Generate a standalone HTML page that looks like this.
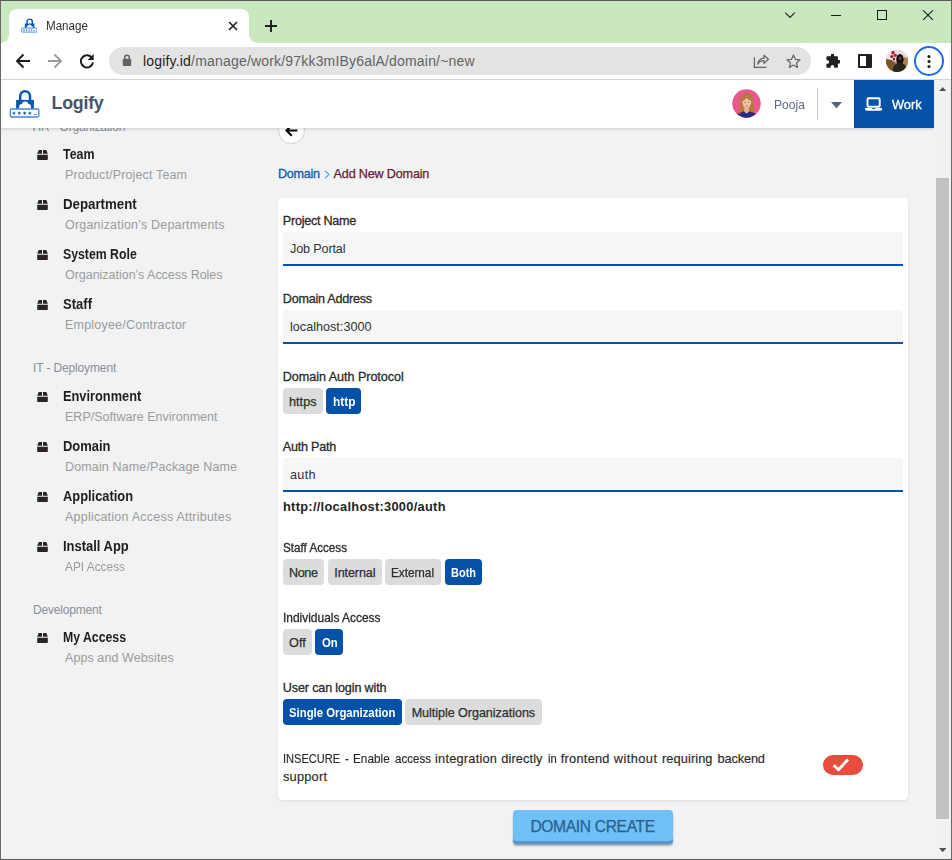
<!DOCTYPE html>
<html lang="en">
<head>
<meta charset="utf-8">
<title>Manage</title>
<style>
*{box-sizing:border-box;margin:0;padding:0}
html,body{width:952px;height:860px;overflow:hidden;background:#fff}
body{font-family:"Liberation Sans",sans-serif;position:relative;color:#222}
.abs{position:absolute}
.t{position:absolute;white-space:nowrap;line-height:1}
#frame{position:absolute;left:0;top:0;width:952px;height:860px;border:1px solid #686868;border-top-color:#545951;border-bottom-color:#5a5a5a;pointer-events:none;z-index:100}
#tabstrip{left:1px;top:1px;width:950px;height:42px;background:#c9e8c0}
#tab{left:9px;top:9px;width:240px;height:34px;background:#fff;border-radius:8px 8px 0 0}
#tab:before,#tab:after{content:"";position:absolute;bottom:0;width:8px;height:8px;background:radial-gradient(circle at 0 0,transparent 7.5px,#fff 8px)}
#tab:before{left:-8px}
#tab:after{right:-8px;background:radial-gradient(circle at 100% 0,transparent 7.5px,#fff 8px)}
#toolbar{left:1px;top:43px;width:950px;height:37px;background:#fff;border-bottom:1px solid #d3d6d6}
#omni{left:109px;top:47px;width:702px;height:28px;border-radius:14px;background:#e3e3e3}
#app{left:1px;top:80px;width:933px;height:779px;background:#f0f2f4;overflow:hidden}
#hdr{left:0;top:0;width:933px;height:48px;background:#fff;box-shadow:0 1px 3px rgba(0,0,0,.16);z-index:5}
#work{left:853px;top:0;width:80px;height:48px;background:#0352a8}
#sb{left:934px;top:80px;width:17px;height:779px;background:#f1f1f1}
#thumb{left:2px;top:98px;width:13px;height:641px;background:#c1c1c1}
#card{left:277px;top:118px;width:630px;height:602px;background:#fff;border-radius:4px;box-shadow:0 1px 3px rgba(0,0,0,.09)}
.inp{position:absolute;left:282px;width:620px;height:34px;background:#f6f6f6;border-bottom:2px solid #0352a8;border-radius:3px 3px 0 0}
.btn{position:absolute;height:26px;border-radius:4px;background:#dcdcdc}
.btn.on{background:#0352a8}
</style>
</head>
<body>
<div id="tabstrip" class="abs"></div>
<div id="tab" class="abs"></div>
<svg class="abs" style="left:20.600px;top:18.400px" width="16.700" height="15.100" viewBox="0 0 31 30" preserveAspectRatio="none"><path d="M11.200 12V7.200a4.900 4.900 0 0 1 9.800 0V12" fill="none" stroke="#0b57b0" stroke-width="2.700"/><path d="M7.100 10.900h17.800v8.900H7.100z" fill="#0b57b0"/><g fill="#fff"><circle cx="16.100" cy="15.700" r="3"/><circle cx="12.900" cy="17.700" r="2.300"/><circle cx="19.300" cy="17.700" r="2.300"/><rect x="10.600" y="17.700" width="11" height="2.300"/></g><rect x="1.300" y="20" width="28.600" height="8" rx="1.500" fill="#fff" stroke="#3c7fd4" stroke-width="1.700"/><g fill="#0b57b0"><rect x="4.300" y="23" width="2.400" height="2.200"/><rect x="9" y="23" width="2.400" height="2.200"/><rect x="13.800" y="23" width="2.400" height="2.200"/><rect x="18.600" y="23" width="2.400" height="2.200"/><rect x="23.200" y="24.600" width="3.200" height="1.100"/></g></svg>
<div class="t" style="left:45.70px;top:20px;font-size:12.30px;color:#2d2d33;transform:scaleX(0.9426);transform-origin:0 0;">Manage</div>
<svg class="abs" style="left:227px;top:20px" width="12" height="12" viewBox="0 0 12 12"><path d="M2 2l8 8M10 2l-8 8" stroke="#1f1f1f" stroke-width="1.600" fill="none"/></svg>
<svg class="abs" style="left:264px;top:19px" width="14" height="14" viewBox="0 0 14 14"><path d="M7 1v12M1 7h12" stroke="#1f1f1f" stroke-width="1.900" fill="none"/></svg>
<svg class="abs" style="left:783px;top:10px" width="14" height="10" viewBox="0 0 14 10"><path d="M2.200 2.600l4.800 4.800L11.800 2.600" stroke="#1f1f1f" stroke-width="1.050" fill="none"/></svg>
<div class="abs" style="left:831px;top:15px;width:10px;height:1px;background:#1a1a1a"></div>
<div class="abs" style="left:877px;top:10px;width:10px;height:10px;border:1px solid #1a1a1a"></div>
<svg class="abs" style="left:922px;top:9px" width="12" height="12" viewBox="0 0 12 12"><path d="M1.100 1.400l9.800 9.400M10.900 1.400L1.100 10.800" stroke="#1a1a1a" stroke-width="1.100" fill="none"/></svg>
<div id="toolbar" class="abs"></div>
<svg class="abs" style="left:15px;top:53px" width="16" height="16" viewBox="0 0 16 16"><path d="M15 8H2.500M8.500 1.500L2 8l6.500 6.500" stroke="#1b1b1b" stroke-width="1.900" fill="none"/></svg>
<svg class="abs" style="left:47px;top:53px" width="16" height="16" viewBox="0 0 16 16"><path d="M1 8h12.500M7.500 1.500L14 8l-6.500 6.500" stroke="#9b9b9b" stroke-width="1.900" fill="none"/></svg>
<svg class="abs" style="left:79px;top:53px" width="16" height="16" viewBox="0 0 16 16"><path d="M13.200 5.200A6.100 6.100 0 1 0 14 9.400" stroke="#1b1b1b" stroke-width="1.900" fill="none"/><path d="M14.600 1v6h-6z" fill="#1b1b1b"/></svg>
<div id="omni" class="abs"></div>
<svg class="abs" style="left:122px;top:54px" width="10" height="13" viewBox="0 0 10 13"><path d="M2.700 5V3.600a2.300 2.300 0 0 1 4.600 0V5" stroke="#5f6368" stroke-width="1.500" fill="none"/><rect x="0.800" y="4.800" width="8.400" height="7.200" rx="0.900" fill="#5f6368"/></svg>
<div class="t" style="left:143px;top:53.5px;font-size:14px;color:#1f1f1f;letter-spacing:0.185px">logify.id<span style="color:#5f6368">/manage/work/97kk3mIBy6alA/domain/~new</span></div>
<svg class="abs" style="left:752px;top:52px" width="18" height="18" viewBox="0 0 18 18"><path d="M2.400 5.300v10.100h11.900" stroke="#5f6368" stroke-width="1.200" fill="none"/><path d="M5.700 12.200c.5-3.600 2.700-5.700 6.300-6V3.200L16.400 7.300l-4.400 4.100V8.700c-2.700-.1-4.700.9-6.300 3.500z" stroke="#5f6368" stroke-width="1.200" fill="none" stroke-linejoin="round"/></svg>
<svg class="abs" style="left:784.700px;top:52.600px" width="17" height="17" viewBox="0 0 18 18"><path d="M9 2.200l2.050 4.500 4.850.5-3.650 3.300 1.050 4.800L9 12.800 4.700 15.300l1.050-4.800L2.100 7.200l4.850-.5z" stroke="#5f6368" stroke-width="1.300" fill="none" stroke-linejoin="round"/></svg>
<svg class="abs" style="left:824.600px;top:53.800px" width="15.200" height="15.200" viewBox="0 0 16 16"><path d="M6.200 1.200a1.700 1.700 0 0 1 3.400 0v1.300h3.200a.8.800 0 0 1 .8.800v3h1.100a1.800 1.800 0 0 1 0 3.600h-1.100v3.700a.8.800 0 0 1-.8.800H9.600v-1.100a1.800 1.800 0 0 0-3.600 0v1.100H2.300a.8.800 0 0 1-.8-.8v-3.400h1.100a1.800 1.800 0 0 0 0-3.600H1.500V3.300a.8.800 0 0 1 .8-.8h3.900z" fill="#1f1f1f"/></svg>
<div class="abs" style="left:858px;top:54px;width:14px;height:14px;border:2px solid #1f1f1f;border-right-width:6px;border-radius:1px"></div>
<svg class="abs" style="left:885.900px;top:49.800px" width="22" height="22" viewBox="0 0 22 22"><defs><clipPath id="pc"><circle cx="11" cy="11" r="11"/></clipPath><filter id="pb" x="-20%" y="-20%" width="140%" height="140%"><feGaussianBlur stdDeviation="0.55"/></filter></defs><g clip-path="url(#pc)"><rect width="22" height="22" fill="#b58f55"/><g filter="url(#pb)"><path d="M0 0h22v9H13L9 12 0 10z" fill="#e6dfe6"/><path d="M0 9l6 1 2 4-1 6-7 1z" fill="#7a5626"/><path d="M18 7l4 1v10l-4-2z" fill="#a8834c"/><path d="M7.500 6l1.300 9.500-1.200.2z" fill="#3c5a1e"/><circle cx="7" cy="2.700" r="1.700" fill="#b3141d"/><circle cx="9.300" cy="5.300" r="1.600" fill="#c21822"/><circle cx="5.800" cy="6.500" r="1.500" fill="#a3131b"/><circle cx="8" cy="9" r="1.200" fill="#8f1a20"/><ellipse cx="14" cy="9.300" rx="3.700" ry="5.200" fill="#15110f"/><ellipse cx="14.100" cy="8.300" rx="1.300" ry="1.700" fill="#6d4832"/><path d="M6.500 22c0-6 3-9.500 7.500-9.500s6.500 3.500 6.500 9.500z" fill="#20261d"/><circle cx="8.800" cy="13.500" r=".9" fill="#c43aa0"/></g></g></svg>
<div class="abs" style="left:914px;top:46px;width:30px;height:30px;border-radius:50%;border:2px solid #1a6ce6"></div>
<svg class="abs" style="left:927px;top:53px" width="4" height="16" viewBox="0 0 4 16"><circle cx="2" cy="3.500" r="1.550" fill="#1f1f1f"/><circle cx="2" cy="8.500" r="1.550" fill="#1f1f1f"/><circle cx="2" cy="13.500" r="1.550" fill="#1f1f1f"/></svg>
<div id="app" class="abs">
<div id="hdr" class="abs">
<svg class="abs" style="left:8.200px;top:9px" width="31" height="30" viewBox="0 0 31 30"><path d="M11.200 12V7.200a4.900 4.900 0 0 1 9.800 0V12" fill="none" stroke="#0b57b0" stroke-width="2.500"/><path d="M7.100 10.900h17.800v8.900H7.100z" fill="#0b57b0"/><g fill="#fff"><circle cx="16.100" cy="15.700" r="3.200"/><circle cx="12.700" cy="17.500" r="2.500"/><circle cx="19.500" cy="17.500" r="2.500"/><rect x="10.300" y="17.500" width="11.600" height="2.500"/></g><rect x="1.300" y="20" width="28.600" height="8" rx="1.500" fill="#fff" stroke="#4585d6" stroke-width="1.300"/><path d="M5.00 22.70v3.00M3.70 23.45l2.61 1.50M6.30 23.45l-2.61 1.50M10.30 22.70v3.00M9.00 23.45l2.61 1.50M11.61 23.45l-2.61 1.50M15.60 22.70v3.00M14.29 23.45l2.61 1.50M16.91 23.45l-2.61 1.50M20.90 22.70v3.00M19.59 23.45l2.61 1.50M22.20 23.45l-2.61 1.50" stroke="#0b57b0" stroke-width=".85" fill="none"/><rect x="24.900" y="25" width="2.900" height="0.900" fill="#4585d6"/></svg>
<div class="t" style="left:50.60px;top:15px;font-size:17.80px;color:#44546a;letter-spacing:-0.238px;font-weight:bold;">Logify</div>
<svg class="abs" style="left:731.400px;top:9.100px" width="29" height="29" viewBox="0 0 29 29"><defs><clipPath id="uc"><circle cx="14.500" cy="14.500" r="14.200"/></clipPath></defs><circle cx="14.500" cy="14.500" r="14.200" fill="#e9588f"/><g clip-path="url(#uc)"><path d="M8 12.500c0-6 3-8.500 6.800-8.500s6.700 2.500 6.700 8c0 4 .8 8 1.200 11H6.500c1-3 1.500-6.500 1.500-10.500z" fill="#b9783f"/><path d="M3.500 30c0-5.500 4.500-7.800 11-7.800S25.500 24.500 25.500 30z" fill="#2d2a7e"/><path d="M12.300 18.500h4.600v4.300l-2.300 1.700-2.300-1.700z" fill="#e5b48f"/><ellipse cx="14.700" cy="13.300" rx="4.400" ry="5.700" fill="#efc6a4"/><path d="M10 12.200c.8-3.600 2.700-4.700 4.700-4.700s4 1.100 4.600 4.300c-2-.4-3.400-1.300-4.800-3-1.200 1.800-2.700 2.900-4.500 3.400z" fill="#b9783f"/><path d="M9.800 12c-1.200 4-.6 9-3 13.500 2.800-1.500 4.200-4 4.300-7.500z" fill="#b9783f"/><circle cx="12.900" cy="13.300" r=".6" fill="#4c6a8a"/><circle cx="16.500" cy="13.300" r=".6" fill="#4c6a8a"/><path d="M13.700 16.700q1 .6 2 0" stroke="#d03a3a" stroke-width=".9" fill="none"/></g></svg>
<div class="t" style="left:773.20px;top:18px;font-size:13.40px;color:#5d6b7e;transform:scaleX(0.9045);transform-origin:0 0;">Pooja</div>
<div class="abs" style="left:816px;top:8px;width:1px;height:32px;background:#cacaca"></div>
<svg class="abs" style="left:829.700px;top:21.800px" width="11" height="6.300" viewBox="0 0 11 6.300"><path d="M0 0h11L5.500 6.300z" fill="#566579"/></svg>
<div id="work" class="abs"><svg class="abs" style="left:11px;top:17px" width="17.200" height="14" viewBox="0 0 18 14" preserveAspectRatio="none"><rect x="2.600" y="1.300" width="12.800" height="8.400" rx="1" fill="none" stroke="#fff" stroke-width="2"/><path d="M0 11h18v.8a1.900 1.900 0 0 1-1.900 1.900H1.900A1.900 1.900 0 0 1 0 11.800z" fill="#fff"/><rect x="7.200" y="11" width="3.600" height="0.900" fill="#0352a8"/></svg><div class="t" style="left:38.00px;top:18px;font-size:13.60px;color:#fff;transform:scaleX(0.9402);transform-origin:0 0;-webkit-text-stroke:0.35px #fff;">Work</div></div>
</div>
<div class="t" style="left:31.50px;top:41px;font-size:12.00px;color:#8c9096;letter-spacing:-0.190px;">HR - Organization</div>
<svg class="abs" style="left:36px;top:70.00px" width="11" height="10" viewBox="0 0 11 10"><path d="M1.700 0h3.300v3.800H0.200z M6 0h3.300l1.500 3.800H6z M0.200 4.700h10.600v4.500a.7.700 0 0 1-.7.700H0.900a.7.700 0 0 1-.7-.7z" fill="#2a2321"/></svg>
<div class="t" style="left:61.80px;top:67px;font-size:14.00px;color:#211c1e;transform:scaleX(0.8865);transform-origin:0 0;font-weight:bold;">Team</div>
<div class="t" style="left:64.00px;top:89px;font-size:12.50px;color:#9b9b9b;letter-spacing:0.144px;">Product/Project Team</div>
<svg class="abs" style="left:36px;top:120.00px" width="11" height="10" viewBox="0 0 11 10"><path d="M1.700 0h3.300v3.800H0.200z M6 0h3.300l1.500 3.800H6z M0.200 4.700h10.600v4.500a.7.700 0 0 1-.7.700H0.900a.7.700 0 0 1-.7-.7z" fill="#2a2321"/></svg>
<div class="t" style="left:61.80px;top:117px;font-size:14.00px;color:#211c1e;transform:scaleX(0.9480);transform-origin:0 0;font-weight:bold;">Department</div>
<div class="t" style="left:64.00px;top:139px;font-size:12.50px;color:#9b9b9b;letter-spacing:0.192px;">Organization’s Departments</div>
<svg class="abs" style="left:36px;top:170.00px" width="11" height="10" viewBox="0 0 11 10"><path d="M1.700 0h3.300v3.800H0.200z M6 0h3.300l1.500 3.800H6z M0.200 4.700h10.600v4.500a.7.700 0 0 1-.7.700H0.900a.7.700 0 0 1-.7-.7z" fill="#2a2321"/></svg>
<div class="t" style="left:61.80px;top:167px;font-size:14.00px;color:#211c1e;transform:scaleX(0.8776);transform-origin:0 0;font-weight:bold;">System Role</div>
<div class="t" style="left:64.00px;top:189px;font-size:12.50px;color:#9b9b9b;letter-spacing:-0.026px;">Organization’s Access Roles</div>
<svg class="abs" style="left:36px;top:220.00px" width="11" height="10" viewBox="0 0 11 10"><path d="M1.700 0h3.300v3.800H0.200z M6 0h3.300l1.500 3.800H6z M0.200 4.700h10.600v4.500a.7.700 0 0 1-.7.700H0.900a.7.700 0 0 1-.7-.7z" fill="#2a2321"/></svg>
<div class="t" style="left:61.80px;top:217px;font-size:14.00px;color:#211c1e;transform:scaleX(0.9322);transform-origin:0 0;font-weight:bold;">Staff</div>
<div class="t" style="left:64.00px;top:239px;font-size:12.50px;color:#9b9b9b;letter-spacing:0.213px;">Employee/Contractor</div>
<svg class="abs" style="left:36px;top:312.00px" width="11" height="10" viewBox="0 0 11 10"><path d="M1.700 0h3.300v3.800H0.200z M6 0h3.300l1.500 3.800H6z M0.200 4.700h10.600v4.500a.7.700 0 0 1-.7.700H0.900a.7.700 0 0 1-.7-.7z" fill="#2a2321"/></svg>
<div class="t" style="left:61.80px;top:309px;font-size:14.00px;color:#211c1e;transform:scaleX(0.9145);transform-origin:0 0;font-weight:bold;">Environment</div>
<div class="t" style="left:64.00px;top:331px;font-size:12.50px;color:#9b9b9b;letter-spacing:0.015px;">ERP/Software Environment</div>
<svg class="abs" style="left:36px;top:362.00px" width="11" height="10" viewBox="0 0 11 10"><path d="M1.700 0h3.300v3.800H0.200z M6 0h3.300l1.500 3.800H6z M0.200 4.700h10.600v4.500a.7.700 0 0 1-.7.700H0.900a.7.700 0 0 1-.7-.7z" fill="#2a2321"/></svg>
<div class="t" style="left:61.80px;top:359px;font-size:14.00px;color:#211c1e;transform:scaleX(0.9252);transform-origin:0 0;font-weight:bold;">Domain</div>
<div class="t" style="left:64.00px;top:381px;font-size:12.50px;color:#9b9b9b;letter-spacing:0.138px;">Domain Name/Package Name</div>
<svg class="abs" style="left:36px;top:412.00px" width="11" height="10" viewBox="0 0 11 10"><path d="M1.700 0h3.300v3.800H0.200z M6 0h3.300l1.500 3.800H6z M0.200 4.700h10.600v4.500a.7.700 0 0 1-.7.700H0.900a.7.700 0 0 1-.7-.7z" fill="#2a2321"/></svg>
<div class="t" style="left:61.80px;top:409px;font-size:14.00px;color:#211c1e;transform:scaleX(0.9184);transform-origin:0 0;font-weight:bold;">Application</div>
<div class="t" style="left:64.00px;top:431px;font-size:12.50px;color:#9b9b9b;letter-spacing:0.230px;">Application Access Attributes</div>
<svg class="abs" style="left:36px;top:462.00px" width="11" height="10" viewBox="0 0 11 10"><path d="M1.700 0h3.300v3.800H0.200z M6 0h3.300l1.500 3.800H6z M0.200 4.700h10.600v4.500a.7.700 0 0 1-.7.700H0.900a.7.700 0 0 1-.7-.7z" fill="#2a2321"/></svg>
<div class="t" style="left:61.80px;top:459px;font-size:14.00px;color:#211c1e;transform:scaleX(0.9255);transform-origin:0 0;font-weight:bold;">Install App</div>
<div class="t" style="left:64.00px;top:481px;font-size:12.50px;color:#9b9b9b;transform:scaleX(0.9491);transform-origin:0 0;">API Access</div>
<svg class="abs" style="left:36px;top:553.00px" width="11" height="10" viewBox="0 0 11 10"><path d="M1.700 0h3.300v3.800H0.200z M6 0h3.300l1.500 3.800H6z M0.200 4.700h10.600v4.500a.7.700 0 0 1-.7.700H0.900a.7.700 0 0 1-.7-.7z" fill="#2a2321"/></svg>
<div class="t" style="left:61.80px;top:550px;font-size:14.00px;color:#211c1e;transform:scaleX(0.8767);transform-origin:0 0;font-weight:bold;">My Access</div>
<div class="t" style="left:64.00px;top:572px;font-size:12.50px;color:#9b9b9b;letter-spacing:0.080px;">Apps and Websites</div>
<div class="t" style="left:32.00px;top:282px;font-size:12.00px;color:#8c9096;letter-spacing:-0.135px;">IT - Deployment</div>
<div class="t" style="left:32.00px;top:524px;font-size:12.00px;color:#8c9096;letter-spacing:-0.196px;">Development</div>
<div class="abs" style="left:277px;top:37px;width:27px;height:27px;border-radius:50%;background:#fff;border:1px solid #d0d0d0"></div>
<svg class="abs" style="left:283.9px;top:43.8px" width="13" height="13" viewBox="0 0 13 13"><path d="M12.400 6.500H1.800M6.700 1.200L1.400 6.500l5.300 5.300" stroke="#0a0a0a" stroke-width="2.100" fill="none"/></svg>
<div class="t" style="left:276.90px;top:88px;font-size:12.60px;color:#0f58ad;letter-spacing:-0.243px;-webkit-text-stroke:0.3px #0f58ad;">Domain</div>
<svg class="abs" style="left:323.0px;top:89.6px" width="6" height="9" viewBox="0 0 6 9"><path d="M1 0.700L5 4.500 1 8.300" stroke="#5aa9ea" stroke-width="1.200" fill="none"/></svg>
<div class="t" style="left:332.60px;top:88px;font-size:12.60px;color:#6a1b29;letter-spacing:-0.173px;-webkit-text-stroke:0.25px #6a1b29;">Add New Domain</div>
<div id="card" class="abs"></div>
<div class="t" style="left:281.80px;top:135px;font-size:12.60px;color:#2a2a2a;letter-spacing:-0.252px;-webkit-text-stroke:0.3px #2a2a2a;">Project Name</div>
<div class="inp" style="top:152px"></div>
<div class="t" style="left:289.00px;top:163px;font-size:12.60px;color:#333;letter-spacing:-0.137px;">Job Portal</div>
<div class="t" style="left:281.80px;top:213px;font-size:12.60px;color:#2a2a2a;letter-spacing:-0.242px;-webkit-text-stroke:0.3px #2a2a2a;">Domain Address</div>
<div class="inp" style="top:230px"></div>
<div class="t" style="left:289.00px;top:241px;font-size:12.60px;color:#333;letter-spacing:0.018px;">localhost:3000</div>
<div class="t" style="left:281.80px;top:291px;font-size:12.60px;color:#2a2a2a;letter-spacing:-0.043px;-webkit-text-stroke:0.3px #2a2a2a;">Domain Auth Protocol</div>
<div class="btn" style="left:282.00px;top:308px;width:40.00px"></div>
<div class="t" style="left:288.00px;top:316px;font-size:12.60px;color:#2e2e2e;letter-spacing:0.046px;-webkit-text-stroke:0.25px #2e2e2e;">https</div>
<div class="btn on" style="left:325.00px;top:308px;width:35.00px"></div>
<div class="t" style="left:331.50px;top:316px;font-size:12.60px;color:#fff;transform:scaleX(0.9460);transform-origin:0 0;font-weight:bold;">http</div>
<div class="t" style="left:281.80px;top:361px;font-size:12.60px;color:#2a2a2a;letter-spacing:-0.224px;-webkit-text-stroke:0.3px #2a2a2a;">Auth Path</div>
<div class="inp" style="top:378px"></div>
<div class="t" style="left:289.00px;top:389px;font-size:12.60px;color:#333;letter-spacing:0.326px;">auth</div>
<div class="t" style="left:282.00px;top:421px;font-size:12.80px;color:#1f1f1f;letter-spacing:0.298px;font-weight:bold;">http://localhost:3000/auth</div>
<div class="t" style="left:281.80px;top:462px;font-size:12.60px;color:#2a2a2a;transform:scaleX(0.9269);transform-origin:0 0;-webkit-text-stroke:0.3px #2a2a2a;">Staff Access</div>
<div class="btn" style="left:282.00px;top:479px;width:40.80px"></div>
<div class="t" style="left:288.00px;top:487px;font-size:12.60px;color:#2e2e2e;letter-spacing:-0.374px;-webkit-text-stroke:0.25px #2e2e2e;">None</div>
<div class="btn" style="left:327.00px;top:479px;width:53.70px"></div>
<div class="t" style="left:333.30px;top:487px;font-size:12.60px;color:#2e2e2e;letter-spacing:-0.118px;-webkit-text-stroke:0.25px #2e2e2e;">Internal</div>
<div class="btn" style="left:384.00px;top:479px;width:56.00px"></div>
<div class="t" style="left:390.40px;top:487px;font-size:12.60px;color:#2e2e2e;transform:scaleX(0.9303);transform-origin:0 0;-webkit-text-stroke:0.25px #2e2e2e;">External</div>
<div class="btn on" style="left:444.00px;top:479px;width:37.00px"></div>
<div class="t" style="left:450.30px;top:487px;font-size:12.60px;color:#fff;transform:scaleX(0.8714);transform-origin:0 0;font-weight:bold;">Both</div>
<div class="t" style="left:281.80px;top:532px;font-size:12.60px;color:#2a2a2a;transform:scaleX(0.9475);transform-origin:0 0;-webkit-text-stroke:0.3px #2a2a2a;">Individuals Access</div>
<div class="btn" style="left:282.00px;top:549px;width:28.80px"></div>
<div class="t" style="left:288.00px;top:557px;font-size:12.60px;color:#2e2e2e;letter-spacing:0.088px;-webkit-text-stroke:0.25px #2e2e2e;">Off</div>
<div class="btn on" style="left:314.00px;top:549px;width:28.00px"></div>
<div class="t" style="left:320.70px;top:557px;font-size:12.60px;color:#fff;transform:scaleX(0.9030);transform-origin:0 0;font-weight:bold;">On</div>
<div class="t" style="left:281.80px;top:602px;font-size:12.60px;color:#2a2a2a;letter-spacing:-0.147px;-webkit-text-stroke:0.3px #2a2a2a;">User can login with</div>
<div class="btn on" style="left:282.00px;top:619px;width:118.80px"></div>
<div class="t" style="left:288.00px;top:627px;font-size:12.60px;color:#fff;transform:scaleX(0.9002);transform-origin:0 0;font-weight:bold;">Single Organization</div>
<div class="btn" style="left:404.00px;top:619px;width:137.00px"></div>
<div class="t" style="left:410.70px;top:627px;font-size:12.60px;color:#2e2e2e;letter-spacing:-0.055px;-webkit-text-stroke:0.25px #2e2e2e;">Multiple Organizations</div>
<div class="t" style="left:282.00px;top:673px;font-size:12.80px;color:#2a2a2a;transform:scaleX(0.8618);transform-origin:0 0;-webkit-text-stroke:0.15px #2a2a2a;">INSECURE</div>
<div class="t" style="left:344.00px;top:673px;font-size:12.80px;color:#2a2a2a;transform:scaleX(0.8797);transform-origin:0 0;-webkit-text-stroke:0.15px #2a2a2a;">-</div>
<div class="t" style="left:352.25px;top:673px;font-size:12.80px;color:#2a2a2a;transform:scaleX(0.9221);transform-origin:0 0;-webkit-text-stroke:0.15px #2a2a2a;">Enable</div>
<div class="t" style="left:393.50px;top:673px;font-size:12.80px;color:#2a2a2a;transform:scaleX(0.9037);transform-origin:0 0;-webkit-text-stroke:0.15px #2a2a2a;">access</div>
<div class="t" style="left:434.00px;top:673px;font-size:12.80px;color:#2a2a2a;letter-spacing:0.222px;-webkit-text-stroke:0.15px #2a2a2a;">integration</div>
<div class="t" style="left:500.25px;top:673px;font-size:12.80px;color:#2a2a2a;letter-spacing:0.101px;-webkit-text-stroke:0.15px #2a2a2a;">directly</div>
<div class="t" style="left:546.50px;top:673px;font-size:12.80px;color:#2a2a2a;transform:scaleX(0.8783);transform-origin:0 0;-webkit-text-stroke:0.15px #2a2a2a;">in</div>
<div class="t" style="left:559.75px;top:673px;font-size:12.80px;color:#2a2a2a;letter-spacing:0.254px;-webkit-text-stroke:0.15px #2a2a2a;">frontend</div>
<div class="t" style="left:612.75px;top:673px;font-size:12.80px;color:#2a2a2a;letter-spacing:0.449px;-webkit-text-stroke:0.15px #2a2a2a;">without</div>
<div class="t" style="left:661.00px;top:673px;font-size:12.80px;color:#2a2a2a;letter-spacing:0.087px;-webkit-text-stroke:0.15px #2a2a2a;">requiring</div>
<div class="t" style="left:716.50px;top:673px;font-size:12.80px;color:#2a2a2a;letter-spacing:-0.149px;-webkit-text-stroke:0.15px #2a2a2a;">backend</div>
<div class="t" style="left:282.00px;top:691px;font-size:12.80px;color:#2a2a2a;letter-spacing:0.218px;-webkit-text-stroke:0.15px #2a2a2a;">support</div>
<div class="abs" style="left:822px;top:675px;width:40px;height:20px;border-radius:10px;background:#e74c3c"></div>
<svg class="abs" style="left:822px;top:675px" width="40" height="20" viewBox="0 0 40 20"><path d="M10.600 10.100L15.500 14.800 24.900 4.600" stroke="#fff" stroke-width="2.900" fill="none"/></svg>
<div class="abs" style="left:512px;top:730px;width:160px;height:31px;border-radius:4px;background:#6fc0f7;box-shadow:0 3.500px 0 #5a96c8,0 4.500px 2px rgba(0,0,0,.28)"></div>
<div class="t" style="left:529.40px;top:739px;font-size:15.60px;color:#2b5f8e;letter-spacing:-0.338px;-webkit-text-stroke:0.25px #2b5f8e;">DOMAIN CREATE</div>
</div>
<div id="sb" class="abs"><div id="thumb" class="abs"></div>
<svg class="abs" style="left:4.800px;top:7px" width="7.400" height="4.200" viewBox="0 0 7.400 4.200"><path d="M0 4.200L3.700 0l3.700 4.200z" fill="#505050"/></svg>
<svg class="abs" style="left:4.800px;top:768px" width="7.400" height="4.200" viewBox="0 0 7.400 4.200"><path d="M0 0h7.400L3.700 4.200z" fill="#505050"/></svg>
</div>
<div id="frame"></div>
</body>
</html>
